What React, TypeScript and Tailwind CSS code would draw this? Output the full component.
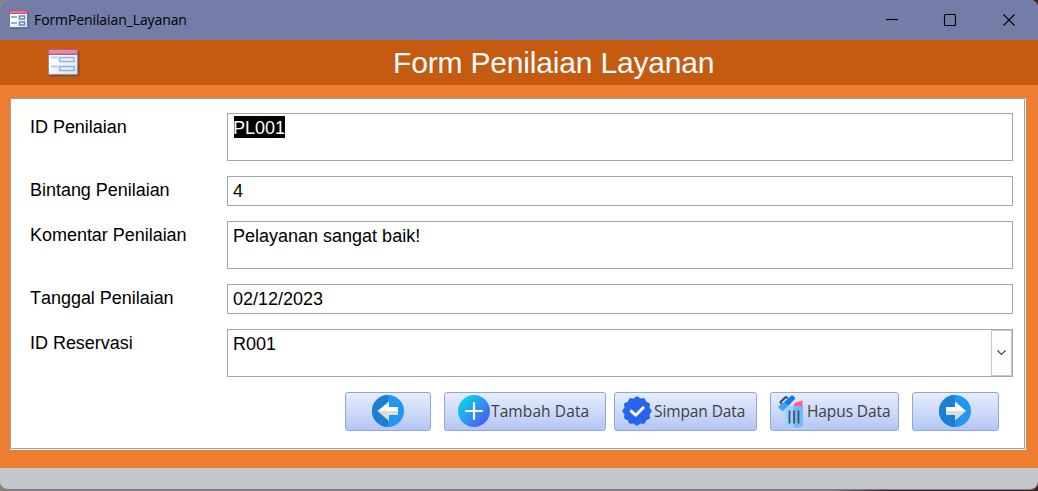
import React from "react";

function FormGlyph({ large = false }: { large?: boolean }) {
  const id = large ? "large" : "small";
  return large ? (
    <svg width="34" height="30" viewBox="0 0 34 30" className="block">
      <defs>
        <linearGradient id={id} x2="1" y2="1"><stop offset=".3" stopColor="#fff" /><stop offset="1" stopColor="#d3e1f2" /></linearGradient>
      </defs>
      <rect x="3" y="3" width="29.500" height="25.500" rx="1" fill="#71401e" opacity=".55" />
      <rect x="1" y="1" width="30" height="26" fill="#5b6d88" />
      <rect x="1" y="1" width="29" height="25" fill={`url(#${id})`} />
      <rect x="1" y="1" width="30" height="6" fill="#c05c84" />
      <rect x="2" y="2" width="28" height="3.500" fill="#d990ae" />
      <path d="M1.5 7V26.5H30.5V7" fill="none" stroke="#8396b2" />
      <path d="M4 9.5h7M4 18.5h7" stroke="#b8cfe7" strokeWidth="2" />
      <path d="M12.5 9.5h14.500v4h-14.500zM12.500 18.5h14.500v4h-14.500z" fill="#e8f1fb" stroke="#94b4d8" strokeWidth="1.5" />
    </svg>
  ) : (
    <svg width="22" height="21" viewBox="0 0 22 21" className="block -translate-y-px">
      <defs>
        <linearGradient id={id} x2="1" y2="1"><stop offset=".3" stopColor="#fff" /><stop offset="1" stopColor="#d1deef" /></linearGradient>
      </defs>
      <path d="M2 19.5h19V2" fill="none" stroke="#555e82" opacity=".6" />
      <rect x="1" y="1" width="19" height="18" fill={`url(#${id})`} />
      <path d="M1.5 1v17.5h18V1" fill="none" stroke="#6379a2" />
      <path d="M1 3h19" stroke="#c05379" strokeWidth="4" />
      <path d="M2 3h17" stroke="#d58ba8" strokeWidth="1.5" />
      <path d="M3 8h6M3 14h6" stroke="#7f95ba" strokeWidth="1.6" />
      <path d="M11.500 7h5v3h-5zM11.500 13h5v3h-5z" fill="#edf4fc" stroke="#7188b0" strokeWidth="1.5" />
    </svg>
  );
}

function ArrowIcon({ right = false }: { right?: boolean }) {
  return (
    <svg width="32" height="32" viewBox="0 0 32 32" className="block">
      <circle cx="16" cy="16" r="16" fill="#2196f3" />
      <path d="M16 0a16 16 0 0 0 0 32z" fill="#1b80d4" />
      {right ? (
        <>
          <path d="M7 16v-4h9V6.5L27 16z" fill="#fff" />
          <path d="M7 16v4h9v5.5L27 16z" fill="#ddd" />
        </>
      ) : (
        <>
          <path d="M26 16v-4h-9V6.5L5.5 16z" fill="#fff" />
          <path d="M26 16v4h-9v6L5.5 16z" fill="#ddd" />
        </>
      )}
    </svg>
  );
}

function PlusIcon() {
  return (
    <svg width="32" height="32" viewBox="0 0 32 32" className="block shrink-0">
      <defs>
        <linearGradient id="plus" x1=".1" y1=".15" x2=".85" y2=".85"><stop stopColor="#09d2ef" /><stop offset="1" stopColor="#4b61f2" /></linearGradient>
      </defs>
      <circle cx="16" cy="16" r="16" fill="url(#plus)" />
      <path d="M8 16h16M16 8v16" stroke="#fff" strokeWidth="2.200" strokeLinecap="round" />
    </svg>
  );
}

function BadgeIcon() {
  const tips = Array.from({ length: 48 }, (_, i) => {
    const angle = (i * Math.PI) / 24;
    const radius = 13.9 + 0.9 * Math.cos(angle * 12);
    return `${(15 + radius * Math.sin(angle)).toFixed(2)},${(15 - radius * Math.cos(angle)).toFixed(2)}`;
  });
  return (
    <svg width="30" height="30" viewBox="0 0 30 30" className="block shrink-0">
      <polygon points={tips.join(" ")} fill="#2863eb" />
      <path d="M9.200 15.200l4.500 4 7.500-7.400" fill="none" stroke="#fff" strokeWidth="3" strokeLinecap="round" strokeLinejoin="round" />
    </svg>
  );
}

function TrashIcon() {
  return (
    <svg width="26" height="33" viewBox="0 0 26 33" className="block shrink-0">
      <path d="M15.500 10L17 7.800 24.500 5.500V11h-9z" fill="#ff5c92" />
      <path d="M7 11h18v17.500a4 4 0 0 1-4 4H11a4 4 0 0 1-4-4z" fill="#99d0ff" />
      <path d="M16 11h9v17.500a4 4 0 0 1-4 4h-5z" fill="#70b9ff" />
      <path d="M3.500 9L2.500 7 7.500 2.200 10 3" fill="none" stroke="#454850" strokeWidth="2" />
      <path d="M13 1q1-1 2.200 0l1.300 1.300q1 1 0 2L5.500 15.500q-1 1-2 0L.9 12.900q-1-1 0-2z" fill="#3ba3ff" />
      <path d="M13 1q1-1 2.200 0l1.300 1.300q1 1 0 2L10.500 10.500l-4-3z" fill="#087cfa" />
      <path d="M11.500 15.500v13M16 15.500v13M20.500 15.500v13" stroke="#454c5b" strokeWidth="1.700" />
    </svg>
  );
}

const button = "flex h-[39px] shrink-0 items-start rounded-[3px] border border-[#8ea8df] bg-linear-to-b from-[#e7edfc] to-[#b4c6f4] pt-[2px]";
const caption = "mt-[4px] block whitespace-nowrap font-['Open_Sans'] text-[15.5px] leading-[24px] text-[#404040]";

type FieldProps = { label: string; value: string; tall?: boolean; selected?: boolean; combo?: boolean };

function Field({ label, value, tall, selected, combo }: FieldProps) {
  return (
    <div className={`flex ${tall ? "h-[48px]" : "h-[30px]"}`}>
      <label className="w-[198px] shrink-0 whitespace-nowrap pl-px pt-[3px] text-[18px] leading-[22px] tracking-[-0.03px] [font-kerning:none]">{label}</label>
      <div className="flex w-[786px] items-start justify-between border border-[#a6a6a6] pl-[5px] pt-[2px]">
        <span className={`block h-[22px] text-[18px] leading-[24px] ${selected ? "ml-px -indent-px bg-black text-white" : ""}`}>{value}</span>
        {combo && (
          <button className="-mt-[2px] flex h-[46px] w-[21px] items-center justify-center border border-[#c8c8c8] bg-[#fdfdfd]" aria-label="Open">
            <svg width="9" height="6" viewBox="0 0 9 6"><path d="M.5.5l4 4 4-4" fill="none" stroke="#444" strokeWidth="1.1" /></svg>
          </button>
        )}
      </div>
    </div>
  );
}

export default function App() {
  return (
    <div className="h-[491px] w-[1038px] overflow-hidden bg-linear-to-r from-[#8b8270] from-80% to-[#3e2419] to-85% font-['Liberation_Sans',sans-serif] text-black">
      <div className="flex h-[490px] flex-col overflow-hidden rounded-[8px] border-b border-[#737da8] bg-[#c5c6ca]">
        <header className="flex h-[40px] shrink-0 items-center justify-between bg-[#737da8]">
          <div className="flex items-center pl-[8px]">
            <FormGlyph />
            <span className="ml-[4px] whitespace-nowrap font-['Open_Sans'] text-[14px] leading-[20px] tracking-[-0.1px]">FormPenilaian_Layanan</span>
          </div>
          <svg width="152" height="40" viewBox="0 0 152 40" fill="none" stroke="#000" strokeWidth="1.1">
            <path d="M0 19.500h12" />
            <rect x="58.500" y="14.500" width="11" height="11" rx="1" />
            <path d="M117.500 14.500l11 11M128.500 14.500l-11 11" />
          </svg>
        </header>
        <div className="flex h-[45px] shrink-0 bg-[#c55a11]">
          <div className="w-[393px] pl-[47px] pt-[8px]"><FormGlyph large /></div>
          <h1 className="whitespace-nowrap pt-[5px] text-[30px] leading-[36px] tracking-[-0.18px] text-white">Form Penilaian Layanan</h1>
        </div>
        <main className="h-[383px] shrink-0 bg-[#ed7d31] pl-[10px] pt-[13px]">
          <div className="h-[352px] w-[1016px] border border-b-white border-l-[#a0a0a0] border-r-white border-t-[#a0a0a0] bg-white">
            <div className="h-[350px] w-[1014px] border border-b-[#a0a0a0] border-l-white border-r-[#a0a0a0] border-t-white pl-[17px] pt-[13px]">
              <div className="flex flex-col gap-[15px]">
                <Field label="ID Penilaian" value="PL001" tall selected />
                <Field label="Bintang Penilaian" value="4" />
                <Field label="Komentar Penilaian" value="Pelayanan sangat baik!" tall />
                <Field label="Tanggal Penilaian" value="02/12/2023" />
                <Field label="ID Reservasi" value="R001" tall combo />
              </div>
              <div className="ml-[316px] mt-[15px] flex">
                <button className={`${button} w-[86px] justify-center`} aria-label="Previous"><ArrowIcon /></button>
                <button className={`${button} ml-[13px] w-[162px] pl-[13px]`}><PlusIcon /><span className={`${caption} ml-px tracking-[0.1px]`}>Tambah Data</span></button>
                <button className={`${button} ml-[8px] w-[143px] pl-[7px]`}><span className="pt-[1px]"><BadgeIcon /></span><span className={`${caption} ml-[2px] tracking-[-0.1px]`}>Simpan Data</span></button>
                <button className={`${button} ml-[13px] w-[129px] pl-[7px]`}><TrashIcon /><span className={`${caption} ml-[3px] tracking-[-0.1px]`}>Hapus Data</span></button>
                <button className={`${button} ml-[13px] w-[87px] pl-[26px]`} aria-label="Next"><ArrowIcon right /></button>
              </div>
            </div>
          </div>
        </main>
      </div>
    </div>
  );
}
